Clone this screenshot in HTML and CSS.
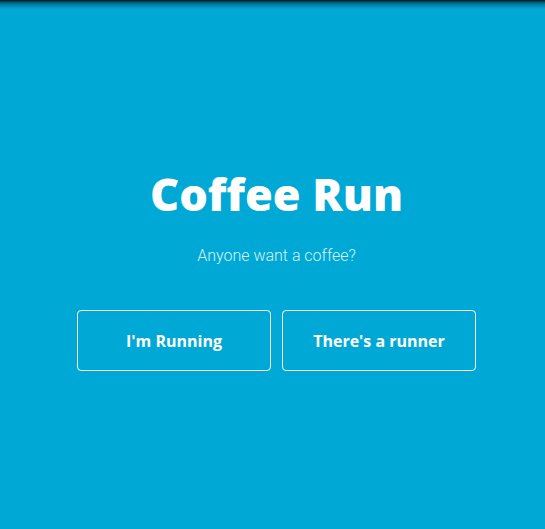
FILE: index.html
```html
<!DOCTYPE html>
<html>
<head>
<meta charset="utf-8">
<link rel="stylesheet" href="styles.css">
</head>
<body>
<div class="shade"></div>
<main class="hero">
  <h1 class="title">Coffee Run</h1>
  <p class="subtitle">Anyone want a coffee?</p>
  <div class="actions">
    <button class="btn">I'm Running</button>
    <button class="btn">There's a runner</button>
  </div>
</main>
</body>
</html>
```
FILE: styles.css
```css
html, body {
  margin: 0;
  height: 100%;
}
body {
  background: #00a9d5;
  font-family: "Roboto", "Liberation Sans", sans-serif;
  color: #fff;
  position: relative;
}
.shade {
  position: absolute;
  left: 0;
  right: 0;
  top: 0;
  height: 9px;
  background: linear-gradient(to bottom, rgba(0,0,0,0.85), rgba(0,0,0,0.35) 35%, rgba(0,0,0,0));
}
.hero {
  display: flex;
  flex-direction: column;
  align-items: center;
  padding: 166px 0 0 8px;
}
.title {
  margin: 0;
  font-family: "Open Sans", sans-serif;
  font-weight: 800;
  font-size: 45px;
  line-height: 56px;
}
.subtitle {
  margin: 24px 0 0;
  font-weight: 300;
  font-size: 16px;
  line-height: 20px;
  color: #d8f2fa;
}
.actions {
  display: flex;
  gap: 11px;
  margin-top: 44px;
}
.btn {
  width: 194px;
  height: 61px;
  background: transparent;
  border: 1px solid #fff;
  border-radius: 4px;
  color: #fff;
  font-family: "Open Sans", sans-serif;
  font-weight: 700;
  font-size: 16px;
}
```
